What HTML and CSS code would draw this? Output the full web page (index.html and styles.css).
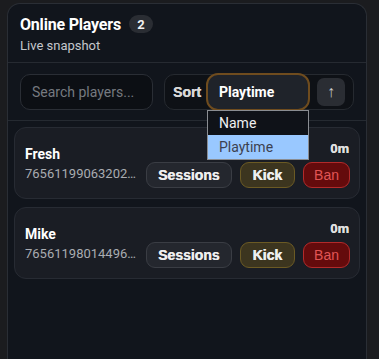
FILE: index.html
```html
<!DOCTYPE html>
<html>
<head>
<meta charset="utf-8">
<link rel="stylesheet" href="styles.css">
</head>
<body>
<div class="panel">
  <div class="header">
    <div class="title-row">
      <span class="title">Online Players</span>
      <span class="badge">2</span>
    </div>
    <div class="subtitle">Live snapshot</div>
  </div>
  <div class="controls">
    <input class="search" type="text" placeholder="Search players...">
    <div class="sort-group">
      <span class="sort-label">Sort</span>
      <div class="select-wrap">
        <div class="select">Playtime</div>
        <ul class="dropdown">
          <li class="opt">Name</li>
          <li class="opt opt-selected">Playtime</li>
        </ul>
      </div>
      <button class="dir-btn">↑</button>
    </div>
  </div>
  <div class="list">
    <div class="card">
      <div class="info">
        <div class="name">Fresh</div>
        <div class="sid">76561199063202775</div>
      </div>
      <div class="side">
        <div class="time">0m</div>
        <div class="actions">
          <button class="btn btn-sessions">Sessions</button>
          <button class="btn btn-kick">Kick</button>
          <button class="btn btn-ban">Ban</button>
        </div>
      </div>
    </div>
    <div class="card">
      <div class="info">
        <div class="name">Mike</div>
        <div class="sid">76561198014496320</div>
      </div>
      <div class="side">
        <div class="time">0m</div>
        <div class="actions">
          <button class="btn btn-sessions">Sessions</button>
          <button class="btn btn-kick">Kick</button>
          <button class="btn btn-ban">Ban</button>
        </div>
      </div>
    </div>
  </div>
</div>
</body>
</html>
```

FILE: styles.css
```css
* { box-sizing: border-box; }
html, body { height: 100%; }
body {
  margin: 0;
  background: #1b1c1f;
  font-family: Roboto, "Noto Sans", sans-serif;
  color: #e8eaee;
  overflow: hidden;
  padding: 3px 12px 0 7px;
}
.panel {
  width: 360px;
  height: 356px;
  background: #11151c;
  border: 1px solid #2a2e35;
  border-bottom: none;
  border-radius: 13px 13px 0 0;
}
.header {
  padding: 10px 12px 8px;
  border-bottom: 1px solid #262a31;
}
.title-row {
  display: flex;
  align-items: center;
  gap: 8px;
  height: 20px;
}
.title {
  font-size: 16px;
  font-weight: 700;
  color: #ffffff;
  letter-spacing: -0.2px;
}
.badge {
  background: #2a2d33;
  color: #f2f2f2;
  font-size: 13px;
  font-weight: 700;
  border-radius: 9px;
  height: 18px;
  min-width: 24px;
  display: inline-flex;
  align-items: center;
  justify-content: center;
}
.subtitle {
  margin-top: 4px;
  font-size: 13px;
  line-height: 16px;
  color: #c4c7cc;
}
.controls {
  display: flex;
  gap: 11px;
  padding: 11px 12px 10px;
  border-bottom: 1px solid #252a31;
}
.search {
  width: 133px;
  height: 36px;
  background: #0c0f14;
  border: 1px solid #2a2e35;
  border-radius: 10px;
  padding: 0 11px;
  font-family: Roboto, sans-serif;
  font-size: 14px;
  color: #ddd;
  outline: none;
}
.search::placeholder { color: #767a80; }
.sort-group {
  flex: 1;
  display: flex;
  align-items: center;
  height: 36px;
  background: #0e1116;
  border: 1px solid #262a30;
  border-radius: 10px;
  padding: 0 7px 0 8px;
}
.sort-label {
  font-family: "Liberation Sans", Arial, sans-serif;
  font-weight: 700;
  font-size: 14px;
  color: #d8d8d8;
  width: 33px;
  text-shadow: 0.3px 0 0 #d8d8d8;
}
.select-wrap {
  position: relative;
}
.select {
  width: 104px;
  height: 38px;
  margin: -1px 0;
  background: #1f232a;
  border: 2px solid #6f4c1e;
  border-radius: 12px;
  padding: 0 11px;
  display: flex;
  align-items: center;
  font-size: 14px;
  font-weight: 700;
  color: #ffffff;
}
.dropdown {
  position: absolute;
  left: 1px;
  top: 36px;
  width: 102px;
  margin: 0;
  padding: 0;
  list-style: none;
  border: 1px solid #8a8d92;
  background: #0f1218;
}
.opt {
  height: 24px;
  line-height: 24px;
  padding-left: 11px;
  font-size: 14px;
  color: #f0f0f0;
}
.opt-selected {
  background: #99c8ff;
  color: #3c4150;
}
.dir-btn {
  margin-left: 7px;
  width: 28px;
  height: 28px;
  border: none;
  border-radius: 7px;
  background: #2a2d33;
  color: #c8c8c8;
  font-size: 16px;
  padding: 0;
  font-family: "Liberation Sans", Arial, sans-serif;
}
.list {
  padding: 6px;
  display: flex;
  flex-direction: column;
  gap: 8px;
}
.card {
  display: flex;
  align-items: center;
  gap: 6px;
  height: 72px;
  background: #1a1d24;
  border: 1px solid #272b33;
  border-radius: 12px;
  padding: 0 9px 0 10px;
}
.info {
  flex: 1;
  min-width: 0;
}
.name {
  font-size: 14px;
  font-weight: 700;
  color: #ffffff;
  line-height: 18px;
}
.sid {
  margin-top: 3px;
  font-size: 13px;
  color: #a9acb1;
  white-space: nowrap;
  overflow: hidden;
  text-overflow: ellipsis;
}
.side {
  display: flex;
  flex-direction: column;
  align-items: flex-end;
  gap: 6px;
  margin-top: 2px;
}
.time {
  font-family: "Liberation Sans", Arial, sans-serif;
  font-size: 13px;
  font-weight: 700;
  color: #e0e0e0;
  margin-right: 1px;
  text-shadow: 0.3px 0 0 #e0e0e0;
}
.actions {
  display: flex;
  gap: 8px;
}
.btn {
  height: 26px;
  border-radius: 9px;
  padding: 0 11px;
  font-family: "Liberation Sans", Arial, sans-serif;
  font-size: 14px;
  font-weight: 700;
  color: #eeeeee;
  border: 1px solid #3a3d44;
  text-shadow: 0.4px 0 0 #eeeeee;
}
.btn-sessions { background: #24272e; padding: 0 11px; }
.btn-kick {
  background: #3c351f;
  border-color: #6b5a24;
  padding: 0 12px;
}
.btn-ban {
  background: #640b0c;
  border-color: #b22a2a;
  color: #e25555;
  font-weight: 400;
  text-shadow: none;
  padding: 0 10px;
}
```
